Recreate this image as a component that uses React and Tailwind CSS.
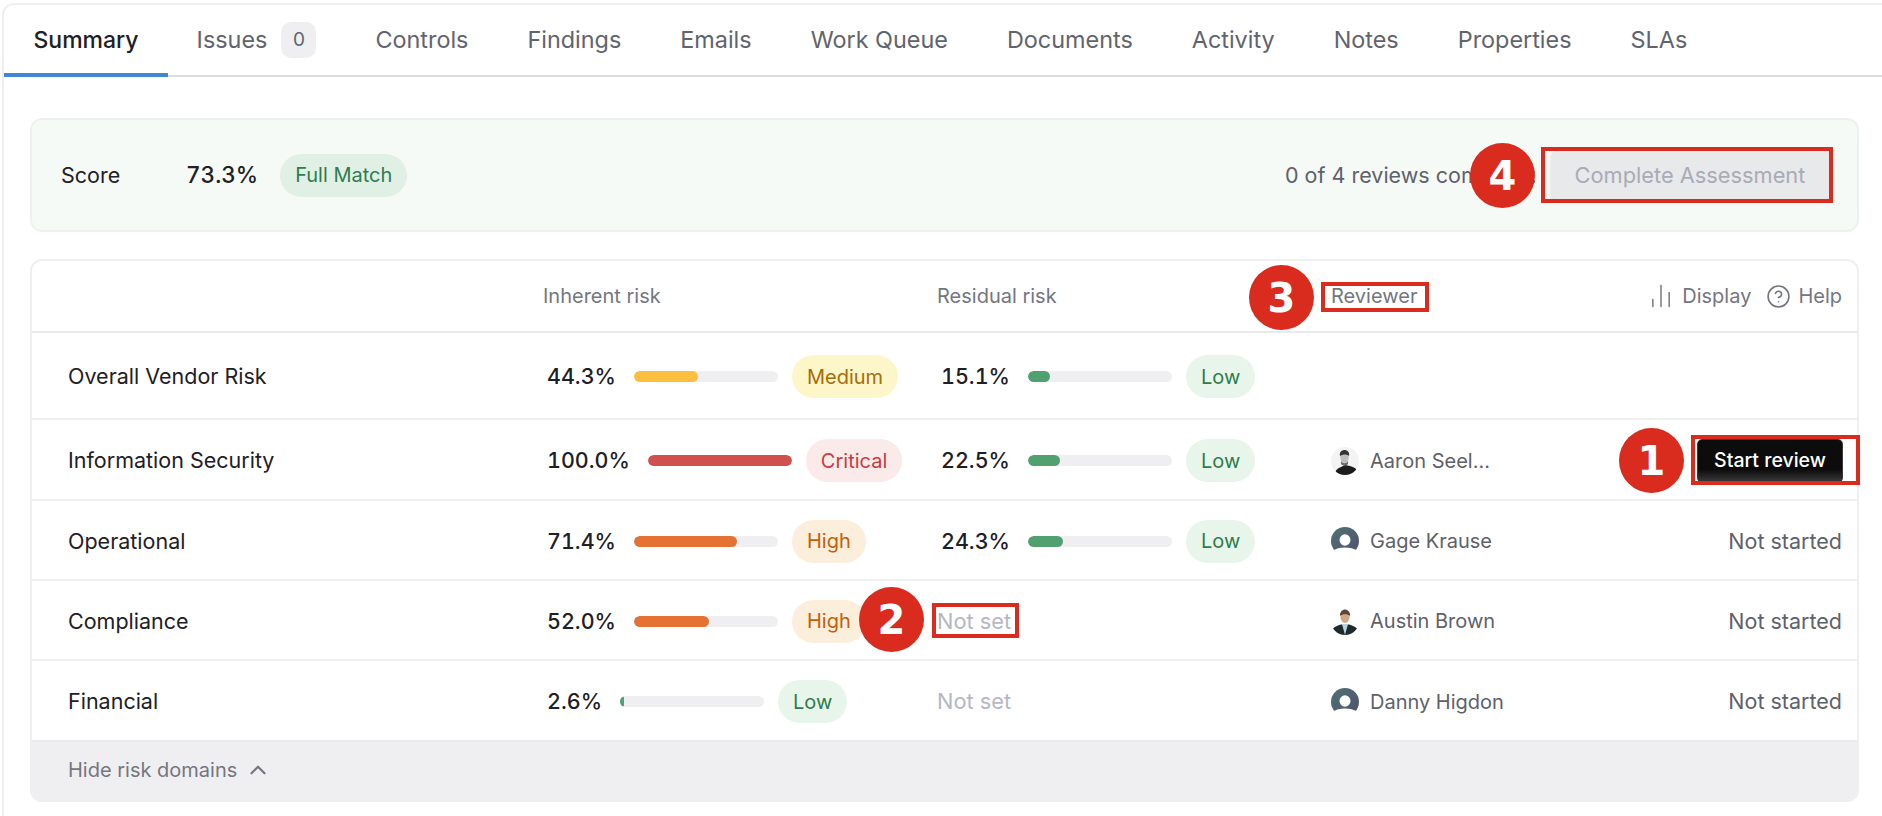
import { ChartNoAxesColumn, ChevronUp, CircleHelp } from 'lucide-react';

const TABS = ['Summary', 'Issues', 'Controls', 'Findings', 'Emails', 'Work Queue', 'Documents', 'Activity', 'Notes', 'Properties', 'SLAs'];

const LEVEL = {
  Low: { bar: 'bg-[#50a070]', pill: 'bg-[#e8f5eb] text-[#2d7d4c]' },
  Medium: { bar: 'bg-[#fdbf3f]', pill: 'bg-[#fdf6c8] text-[#a86c0a]' },
  High: { bar: 'bg-[#e57232]', pill: 'bg-[#fbeedb] text-[#c55e0a]' },
  Critical: { bar: 'bg-[#d05050]', pill: 'bg-[#faeaea] text-[#c83c3c]' },
};

const ROWS = [
  { name: 'Overall Vendor Risk', inherent: [44.3, 'Medium'], residual: [15.1, 'Low'], h: 'h-[87px]' },
  { name: 'Information Security', inherent: [100, 'Critical'], residual: [22.5, 'Low'], reviewer: 'Aaron Seel...', avatar: 'aaron', action: 'button', h: 'h-[81px]' },
  { name: 'Operational', inherent: [71.4, 'High'], residual: [24.3, 'Low'], reviewer: 'Gage Krause', avatar: 'blank', h: 'h-[80px]' },
  { name: 'Compliance', inherent: [52, 'High'], reviewer: 'Austin Brown', avatar: 'austin', h: 'h-[80px]' },
  { name: 'Financial', inherent: [2.6, 'Low'], reviewer: 'Danny Higdon', avatar: 'blank', h: 'h-[79px]' },
];

function Avatar({ kind, id }) {
  if (kind === 'aaron') {
    return (
      <svg width="28" height="28" viewBox="0 0 28 28" className="shrink-0">
        <clipPath id={id}><circle cx="14" cy="14" r="14" /></clipPath>
        <circle cx="14" cy="14" r="14" fill="#f3f3f3" />
        <g clipPath={`url(#${id})`}>
          <path d="M4 28c0-5 3-7 6-8l4-2 5 1c4 1 7 3 8 6l-2 3z" fill="#1c1c1c" />
          <ellipse cx="13.500" cy="10" rx="4.300" ry="6" fill="#bdbdbd" />
          <path d="M9 9c-1-4 2-6 4.500-6s5.500 2 4.500 6c-2-2-6-2-9 0z" fill="#333" />
          <path d="M10 14c2 3 5 3 7 0v3c-2 2-5 2-7 0z" fill="#6a6a6a" />
        </g>
      </svg>
    );
  }
  if (kind === 'austin') {
    return (
      <svg width="28" height="28" viewBox="0 0 28 28" className="shrink-0">
        <clipPath id={id}><circle cx="14" cy="14" r="14" /></clipPath>
        <g clipPath={`url(#${id})`}>
          <path d="M0 25c1-4 5-6 10-7.500h8c5 1.500 9 3.500 10 7.500v3H0z" fill="#1e2a2c" />
          <path d="M11 17l3 11 3-11z" fill="#b9d3e0" />
          <ellipse cx="14" cy="10" rx="4.500" ry="6" fill="#d3a68a" />
          <path d="M9 9c-.5-4 2.500-6.500 5-6.500s5.500 2.500 5 6.500c-2-2.500-8-2.500-10 0z" fill="#5f4632" />
        </g>
      </svg>
    );
  }
  return (
    <svg width="28" height="28" viewBox="0 0 28 28" className="shrink-0">
      <defs>
        <linearGradient id={id} x1="0" y1="0" x2="1" y2="1">
          <stop offset="0" stopColor="#4f7272" />
          <stop offset="1" stopColor="#50506f" />
        </linearGradient>
      </defs>
      <circle cx="14" cy="14" r="14" fill={`url(#${id})`} />
      <ellipse cx="14" cy="13" rx="5.500" ry="5.800" fill="#fff" />
      <path d="M1 28v-4c4-2.500 8-3.500 13-3.500s9 1 13 3.500v4z" fill="#fff" />
    </svg>
  );
}

function Risk({ value, level }) {
  const s = LEVEL[level];
  return (
    <div className="flex items-center pl-[4px]">
      <span className="text-[21.5px] font-medium tabular-nums text-[#1e2025]">{value.toFixed(1)}%</span>
      <div className="ml-[18px] h-[11px] w-[144px] overflow-hidden rounded-full bg-[#efeff1]">
        <div className={`h-full rounded-full ${s.bar}`} style={{ width: `${value}%` }} />
      </div>
      <span className={`ml-[14px] flex h-[43px] items-center rounded-full px-[15px] text-[20px] ${s.pill}`}>{level}</span>
    </div>
  );
}

function Marker({ n, className }) {
  return (
    <div className={`absolute flex h-[65px] w-[65px] items-center justify-center rounded-full bg-[#da2c1e] font-['DejaVu_Sans',sans-serif] text-[40px] font-bold text-white ${className}`}>
      {n}
    </div>
  );
}

export default function App() {
  return (
    <div className="relative h-screen overflow-hidden bg-white pl-[2px] pt-[3px] font-['Inter',sans-serif]">
      <div className="h-full rounded-tl-xl border-l-2 border-t-2 border-[#eeeff2]">
        <div className="flex h-[72px] border-b-2 border-[#dcdde3]">
          {TABS.map((t, i) => (
            <div
              key={t}
              className={`-mb-[2px] flex items-center gap-[14px] border-b-4 px-[29.5px] pt-[2px] ${i === 0 ? 'border-[#4087d0] text-[23px] font-medium text-[#1e2025]' : 'border-transparent text-[23.4px] text-[#62646c]'} ${i === 1 ? '-ml-[1px]' : ''}`}
            >
              {t}
              {t === 'Issues' && (
                <span className="flex h-[36px] w-[35px] items-center justify-center rounded-[10px] bg-[#efeff2] text-[19px]">0</span>
              )}
            </div>
          ))}
        </div>

        <div className="pl-[26px] pr-[23px] pt-[41px]">
          <div className="flex h-[114px] items-center rounded-xl border-2 border-[#eff1ef] bg-[#f5faf6] pl-[29px] pr-[26px]">
            <span className="w-[125px] text-[21.5px] text-[#1e2025]">Score</span>
            <span className="text-[22.5px] font-medium tabular-nums text-[#1e2025]">73.3%</span>
            <span className="ml-[22px] flex h-[43px] items-center rounded-full bg-[#e1f0e4] px-[15px] text-[20px] text-[#2e7d4f]">Full Match</span>
            <span className="ml-auto w-[250px] overflow-hidden whitespace-nowrap text-[21.5px] text-[#5f6169]">0 of 4 reviews completed</span>
            <button className="ml-[16px] h-[48px] w-[280px] shrink-0 rounded-[5px] bg-[#e7e9ea] pr-[2px] text-[21.8px] text-[#a9abb6] shadow-[0_2px_3px_rgba(0,0,0,0.12)]">
              Complete Assessment
            </button>
          </div>

          <div className="mt-[27px] overflow-hidden rounded-xl border-2 border-[#eeeff1]">
            <div className="grid h-[72px] grid-cols-[511px_394px_394px_1fr] items-center border-b-2 border-[#e9eaec] text-[20px] text-[#74767f]">
              <div />
              <div>Inherent risk</div>
              <div>Residual risk</div>
              <div className="flex items-center justify-between pr-[15px]">
                <span>Reviewer</span>
                <span className="flex items-center gap-[15px]">
                  <span className="flex items-center gap-[7px]"><ChartNoAxesColumn size={28} strokeWidth={1.25} />Display</span>
                  <span className="flex items-center gap-[7px]"><CircleHelp size={25} strokeWidth={1.5} />Help</span>
                </span>
              </div>
            </div>

            {ROWS.map((r, i) => (
              <div
                key={r.name}
                className={`grid grid-cols-[511px_394px_394px_1fr] items-center pt-[2px] ${r.h} ${i < ROWS.length - 1 ? 'border-b-2 border-[#f0f0f2]' : ''}`}
              >
                <div className="pl-[36px] text-[21.5px] text-[#1e2025]">{r.name}</div>
                <Risk value={r.inherent[0]} level={r.inherent[1]} />
                {r.residual ? (
                  <Risk value={r.residual[0]} level={r.residual[1]} />
                ) : (
                  <span className="text-[21.8px] text-[#b6b8c0]">Not set</span>
                )}
                <div className="flex items-center justify-between pr-[15px]">
                  {r.reviewer && (
                    <span className="flex items-center gap-[11px] text-[20px] text-[#5f6169]">
                      <Avatar kind={r.avatar} id={`avatar-${i}`} />
                      {r.reviewer}
                    </span>
                  )}
                  {r.action === 'button' ? (
                    <button className="-mr-[1px] h-[44px] w-[146px] rounded-[5px] border border-[#3a3a3a] bg-gradient-to-b from-[#0c0c0c] from-70% to-[#3c3c3c] text-[19.5px] font-medium text-white">
                      Start review
                    </button>
                  ) : r.reviewer ? (
                    <span className="text-[21.5px] text-[#5f6169]">Not started</span>
                  ) : null}
                </div>
              </div>
            ))}

            <div className="flex h-[60px] items-center gap-[8px] border-t-2 border-[#e9eaec] bg-[#efeff2] pb-[3px] pl-[36px] text-[20px] text-[#74767f]">
              Hide risk domains
              <ChevronUp size={26} strokeWidth={2} />
            </div>
          </div>
        </div>
      </div>

      {/* numbered callouts laid over the screenshot */}
      <Marker n="1" className="left-[1619px] top-[428px]" />
      <div className="absolute left-[1691px] top-[435px] h-[50px] w-[169px] border-4 border-[#da2c1e]" />
      <Marker n="2" className="left-[859px] top-[587px]" />
      <div className="absolute left-[932px] top-[603px] h-[35px] w-[87px] border-4 border-[#da2c1e]" />
      <Marker n="3" className="left-[1249px] top-[265px]" />
      <div className="absolute left-[1321px] top-[282px] h-[30px] w-[108px] border-4 border-[#da2c1e]" />
      <Marker n="4" className="left-[1470px] top-[143px]" />
      <div className="absolute left-[1541px] top-[147px] h-[56px] w-[292px] border-4 border-[#da2c1e]" />
    </div>
  );
}
